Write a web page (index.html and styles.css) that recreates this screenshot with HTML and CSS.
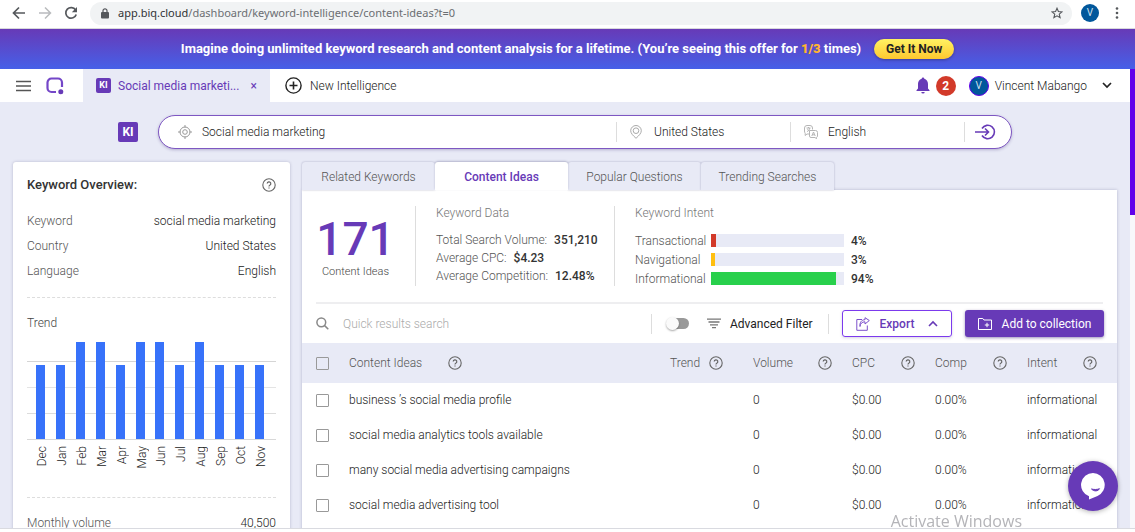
FILE: index.html
```html
<!DOCTYPE html>
<html lang="en">
<head>
  <meta charset="UTF-8">
  <meta name="viewport" content="width=device-width, initial-scale=1.0">
  <title>Content Ideas</title>
  <link rel="stylesheet" href="styles.css">
</head>
<body>

  <!-- shared icons -->
  <svg class="sprite" aria-hidden="true">
    <symbol id="help" viewBox="0 0 14 14">
      <circle cx="7" cy="7" r="6.2" fill="none" stroke="currentColor" stroke-width="1.1"/>
      <path d="M5.2 5.6a1.8 1.8 0 1 1 2.6 1.6c-.6.3-.8.6-.8 1.2M7 9.5v1.1" fill="none" stroke="currentColor" stroke-width="1.2"/>
    </symbol>
  </svg>

  <div class="browser-bar">
    <button class="icon-btn" aria-label="Back"><svg width="14" height="14" viewBox="0 0 14 14"><path d="M13 7H2M7 1.5L1.5 7 7 12.5" fill="none" stroke="#55585c" stroke-width="1.7"/></svg></button>
    <button class="icon-btn" aria-label="Forward"><svg width="14" height="14" viewBox="0 0 14 14"><path d="M1 7h11M7 1.5L12.5 7 7 12.5" fill="none" stroke="#b9bbbe" stroke-width="1.5"/></svg></button>
    <button class="icon-btn" aria-label="Reload"><svg width="14" height="14" viewBox="0 0 14 14"><path d="M11.6 4A5.3 5.3 0 1 0 12.2 8.4" fill="none" stroke="#55585c" stroke-width="1.7"/><path d="M13 1v5.2H7.8z" fill="#55585c"/></svg></button>
    <div class="address">
      <svg width="8" height="11" viewBox="0 0 8 11"><rect y="4" width="8" height="6.5" rx="1" fill="#55585c"/><path d="M2 4.5V2.8a2 2 0 0 1 4 0v1.7" fill="none" stroke="#55585c" stroke-width="1.2"/></svg>
      <label for="url">app.biq.cloud</label>
      <input type="text" id="url" value="/dashboard/keyword-intelligence/content-ideas?t=0">
      <svg width="12" height="12" viewBox="0 0 24 24"><path d="M12 2.5l2.8 6.6 7.2.6-5.5 4.7 1.7 7-6.2-3.8-6.2 3.8 1.7-7L2 9.7l7.2-.6z" fill="none" stroke="#55585c" stroke-width="2.2"/></svg>
    </div>
    <span class="avatar">V</span>
    <button class="icon-btn more" aria-label="Menu"><svg width="4" height="14" viewBox="0 0 4 14" fill="#55585c"><circle cx="2" cy="2.5" r="1.3"/><circle cx="2" cy="7" r="1.3"/><circle cx="2" cy="11.5" r="1.3"/></svg></button>
  </div>

  <div class="promo">
    <p>Imagine doing unlimited keyword research and content analysis for a lifetime. (You’re seeing this offer for <strong>1/3</strong> times)</p>
    <button class="promo-btn">Get It Now</button>
  </div>

  <div class="app">
    <div class="page">
      <nav class="topnav">
        <button class="icon-btn menu" aria-label="Toggle menu"><svg width="15" height="12" viewBox="0 0 15 12"><path d="M0 1.5h15M0 6h15M0 10.5h15" stroke="#555" stroke-width="1.3"/></svg></button>
        <svg class="logo" width="18" height="18" viewBox="0 0 18 18"><path d="M16 10V5.5A4 4 0 0 0 12 1.5H5.5a4 4 0 0 0-4 4V11a4 4 0 0 0 4 4H10" fill="none" stroke="#7446c8" stroke-width="2.2"/><circle cx="14.8" cy="14.8" r="2.5" fill="#673ab7"/></svg>
        <div class="work-tab">
          <span class="ki">KI</span>
          <a href="#">Social media marketi...</a>
          <button class="icon-btn close" aria-label="Close tab">×</button>
        </div>
        <button class="new-intel">
          <svg width="17" height="17" viewBox="0 0 17 17"><circle cx="8.5" cy="8.5" r="7.6" fill="none" stroke="#222" stroke-width="1.4"/><path d="M8.5 4.5v8M4.5 8.5h8" stroke="#222" stroke-width="1.6"/></svg>
          New Intelligence
        </button>
        <div class="account">
          <svg width="14" height="17" viewBox="0 0 14 17" fill="#673ab7"><path d="M7 .5c.8 0 1.3.6 1.3 1.3C10.7 2.5 12 4.5 12 7v4.5l1.5 1.7v.8H.5v-.8L2 11.5V7c0-2.5 1.3-4.5 3.7-5.2C5.7 1.1 6.2.5 7 .5zM5.3 15h3.4A1.7 1.5 0 0 1 5.3 15z"/></svg>
          <span class="count">2</span>
          <span class="avatar ring">V</span>
          <button class="user">Vincent Mabango
            <svg width="10" height="7" viewBox="0 0 10 7"><path d="M1 1l4 4 4-4" fill="none" stroke="#222" stroke-width="1.7"/></svg>
          </button>
        </div>
      </nav>

      <form class="search-row">
        <span class="ki big">KI</span>
        <div class="search">
          <label class="field keyword">
            <svg width="14" height="14" viewBox="0 0 14 14" fill="none" stroke="#999"><circle cx="7" cy="7" r="5"/><circle cx="7" cy="7" r="2.3"/><path d="M7 0v2.5M7 11.5V14M0 7h2.5M11.5 7H14"/></svg>
            <input type="text" value="Social media marketing" aria-label="Keyword">
          </label>
          <label class="field country">
            <svg width="12" height="14" viewBox="0 0 12 14" fill="none" stroke="#aaa"><path d="M6 13.3C3 10.5.7 8.3.7 5.7a5.3 5.2 0 0 1 10.6 0c0 2.6-2.3 4.8-5.3 7.6z"/><circle cx="6" cy="5.7" r="2.8"/></svg>
            <input type="text" value="United States" aria-label="Country">
          </label>
          <label class="field language">
            <svg width="14" height="14" viewBox="0 0 14 14" fill="none" stroke="#b5b5b5"><path d="M5.5 9H3l-1.8 1.5V8.3A4 4 0 0 1 .5 6V3A2.5 2.5 0 0 1 3 .5h3A2.5 2.5 0 0 1 8.5 3v1.5"/><path d="M5.5 5.5h6a2 2 0 0 1 2 2V11a2 2 0 0 1-1 1.5v1.3L11 12.5H7A1.5 1.5 0 0 1 5.5 11zM7.8 11l1.7-4 1.7 4M8.4 9.8h2.2M2.5 3h4M4.5 2v1M3 6.5C4.500 6 5.500 5 5.700 3M3.300 4.200L5 5.700"/></svg>
            <input type="text" value="English" aria-label="Language">
          </label>
          <button class="icon-btn go" aria-label="Search"><svg width="21" height="16" viewBox="0 0 21 16" fill="none" stroke="#673ab7" stroke-width="1.6"><path d="M0 8h13M10 4.5L13.5 8 10 11.5"/><path d="M7 4.5a6.7 6.7 0 1 1 0 7"/></svg></button>
        </div>
      </form>

      <div class="columns">
        <aside class="overview">
          <header>
            <h2>Keyword Overview:</h2>
            <svg class="help"><use href="#help"/></svg>
          </header>
          <dl>
            <div><dt>Keyword</dt><dd>social media marketing</dd></div>
            <div><dt>Country</dt><dd>United States</dd></div>
            <div><dt>Language</dt><dd>English</dd></div>
          </dl>
          <section class="trend">
            <h3>Trend</h3>
            <div class="bars">
              <i style="height: 74px"></i><i style="height: 74px"></i><i style="height: 97px"></i><i style="height: 97px"></i>
              <i style="height: 74px"></i><i style="height: 97px"></i><i style="height: 97px"></i><i style="height: 74px"></i>
              <i style="height: 97px"></i><i style="height: 74px"></i><i style="height: 74px"></i><i style="height: 74px"></i>
            </div>
            <div class="months">
              <span>Dec</span><span>Jan</span><span>Feb</span><span>Mar</span><span>Apr</span><span>May</span>
              <span>Jun</span><span>Jul</span><span>Aug</span><span>Sep</span><span>Oct</span><span>Nov</span>
            </div>
          </section>
          <dl class="volume">
            <div><dt>Monthly volume</dt><dd>40,500</dd></div>
          </dl>
        </aside>

        <main class="results">
          <div class="tabs">
            <a href="#">Related Keywords</a>
            <a href="#" class="active">Content Ideas</a>
            <a href="#">Popular Questions</a>
            <a href="#">Trending Searches</a>
          </div>
          <div class="panel">
            <div class="summary">
              <div class="total"><b>171</b><span>Content Ideas</span></div>
              <div class="data">
                <h4>Keyword Data</h4>
                <p>Total Search Volume: <b>351,210</b></p>
                <p>Average CPC: <b>$4.23</b></p>
                <p>Average Competition: <b>12.48%</b></p>
              </div>
              <div class="intent">
                <h4>Keyword Intent</h4>
                <div class="meter"><span>Transactional</span><div><i class="red" style="width: 4%"></i></div><b>4%</b></div>
                <div class="meter"><span>Navigational</span><div><i class="yellow" style="width: 3%"></i></div><b>3%</b></div>
                <div class="meter"><span>Informational</span><div><i class="green" style="width: 94%"></i></div><b>94%</b></div>
              </div>
            </div>

            <div class="toolbar">
              <label class="quick">
                <svg width="13" height="13" viewBox="0 0 13 13" fill="none" stroke="#888" stroke-width="1.5"><circle cx="5.3" cy="5.3" r="4.4"/><path d="M8.6 8.6l3.7 3.7"/></svg>
                <input type="text" placeholder="Quick results search" aria-label="Quick results search">
              </label>
              <label class="filter">
                <input type="checkbox" class="switch">
                <svg width="14" height="11" viewBox="0 0 14 11"><path d="M0 1.2h14M1.5 4h11M3 6.8h8M5 9.6h4" stroke="#777" stroke-width="1.3"/></svg>
                Advanced Filter
              </label>
              <button class="btn export">
                <svg width="14" height="14" viewBox="0 0 14 14" fill="none" stroke="#7c50cb"><path d="M6 2.5H.8v10.8h10.5V8.5"/><path d="M4 9.5c.2-3 2-4.7 5-4.7V7l4.3-3.5L9 .7v2C5.500 2.800 3.500 5.500 4 9.500z"/></svg>
                Export
                <svg width="10" height="7" viewBox="0 0 10 7"><path d="M1 6l4-4 4 4" fill="none" stroke="#673ab7" stroke-width="1.6"/></svg>
              </button>
              <button class="btn add">
                <svg width="14" height="12" viewBox="0 0 14 12" fill="none" stroke="#fff"><path d="M.5 11.5V.5h4.3L6 2h7.5v9.5zM9 4.8v4.4M6.8 7h4.4"/></svg>
                Add to collection
              </button>
            </div>

            <table>
              <colgroup>
                <col class="c-check"><col><col class="c-trend"><col class="c-volume"><col class="c-cpc"><col class="c-comp"><col class="c-intent">
              </colgroup>
              <thead>
                <tr>
                  <th><input type="checkbox" aria-label="Select all"></th>
                  <th><div class="th near">Content Ideas<svg class="help"><use href="#help"/></svg></div></th>
                  <th><div class="th tight">Trend<svg class="help"><use href="#help"/></svg></div></th>
                  <th><div class="th">Volume<svg class="help"><use href="#help"/></svg></div></th>
                  <th><div class="th">CPC<svg class="help"><use href="#help"/></svg></div></th>
                  <th><div class="th">Comp<svg class="help"><use href="#help"/></svg></div></th>
                  <th><div class="th">Intent<svg class="help"><use href="#help"/></svg></div></th>
                </tr>
              </thead>
              <tbody>
                <tr><td><input type="checkbox" aria-label="Select row"></td><td>business ’s social media profile</td><td></td><td>0</td><td>$0.00</td><td>0.00%</td><td>informational</td></tr>
                <tr><td><input type="checkbox" aria-label="Select row"></td><td>social media analytics tools available</td><td></td><td>0</td><td>$0.00</td><td>0.00%</td><td>informational</td></tr>
                <tr><td><input type="checkbox" aria-label="Select row"></td><td>many social media advertising campaigns</td><td></td><td>0</td><td>$0.00</td><td>0.00%</td><td>informational</td></tr>
                <tr><td><input type="checkbox" aria-label="Select row"></td><td>social media advertising tool</td><td></td><td>0</td><td>$0.00</td><td>0.00%</td><td>informational</td></tr>
              </tbody>
            </table>
          </div>
        </main>
      </div>
    </div>
    <div class="scrollbar"><div class="thumb"></div></div>
  </div>

  <button class="chat" aria-label="Open chat">
    <svg width="26" height="28" viewBox="0 0 26 28"><path d="M13 1a12 12 0 0 1 4.5 23L9 27.5v-3.2A12 12 0 0 1 13 1z" fill="#fff"/><path d="M11.5 17c2.5 2.7 6.5 2.4 8-.3-2.5 1-5.5 1-8 .3z" fill="#673ab7" stroke="#673ab7"/></svg>
  </button>
  <div class="watermark">Activate Windows</div>

</body>
</html>
```
FILE: styles.css
```css
* {
  box-sizing: border-box;
}

body {
  margin: 0;
  height: 100vh;
  display: flex;
  flex-direction: column;
  overflow: hidden;
  padding-bottom: 3px;
  background: #fff;
  color: #222;
  font-family: Roboto, Arial, sans-serif;
  font-size: 12px;
  font-weight: 300;
  line-height: 16px;
}

h2, h3, h4, p, dl, dd {
  margin: 0;
  font-weight: 300;
}

a {
  color: inherit;
  text-decoration: none;
}

button, input {
  font: inherit;
  color: inherit;
}

button {
  border: none;
  background: none;
  padding: 0;
  cursor: pointer;
}

input[type="text"] {
  border: none;
  outline: none;
  background: none;
  padding: 0;
  min-width: 0;
  flex: 1;
}

svg {
  flex: none;
}

.sprite {
  position: absolute;
  width: 0;
  height: 0;
}

.icon-btn {
  display: flex;
  align-items: center;
}

.help {
  width: 14px;
  height: 14px;
  color: #666;
}

.avatar {
  width: 18px;
  height: 18px;
  border-radius: 50%;
  background: #01579b;
  color: #cfe0ee;
  font-size: 10px;
  font-weight: 400;
  line-height: 18px;
  text-align: center;
  flex: none;
}

/* Browser bar */
.browser-bar {
  flex: none;
  height: 29px;
  padding: 0 16px 2px 12px;
  display: flex;
  align-items: center;
  gap: 12px;
  border-bottom: 1px solid #d8d8dc;
}

.browser-bar .more {
  margin-left: 4px;
}

.address {
  flex: 1;
  height: 23px;
  margin-right: -3px;
  padding: 0 9px 0 11px;
  border-radius: 12px;
  background: #f1f3f4;
  display: flex;
  align-items: center;
  font-family: "Noto Sans", sans-serif;
  font-size: 11px;
  font-weight: 400;
  color: #6b6e72;
}

.address label {
  margin-left: 9px;
  color: #303235;
}

/* Promo strip */
.promo {
  flex: none;
  height: 40px;
  display: flex;
  align-items: center;
  justify-content: center;
  gap: 13px;
  background: linear-gradient(#673ab7, #4660e8);
  color: #fff;
  font-size: 13px;
}

.promo p {
  font-weight: 700;
}

.promo strong {
  color: #ffb52e;
}

.promo-btn {
  height: 20px;
  width: 80px;
  border-radius: 10px;
  background: linear-gradient(#fff263, #fdc82f);
  box-shadow: 0 1px 3px rgba(0, 0, 0, 0.3);
  color: #222;
  font-size: 12px;
  font-weight: 700;
}

/* App */
.app {
  flex: 1;
  min-height: 0;
  display: flex;
  border-bottom: 1px solid #d9dae0;
}

.page {
  flex: 1;
  min-width: 0;
  overflow: hidden;
  background: #e8eaf6;
}

.scrollbar {
  width: 5px;
  background: #f8f8fb;
}

.thumb {
  height: 146px;
  background: #6200ea;
}

/* Top navigation */
.topnav {
  height: 33px;
  padding: 0 18px 0 16px;
  display: flex;
  align-items: center;
  background: #fff;
  font-weight: 400;
}

.logo {
  margin: 0 19px 0 15px;
}

.work-tab {
  align-self: stretch;
  width: 187px;
  padding: 0 13px;
  display: flex;
  align-items: center;
  gap: 7px;
  background: #e8eaf6;
  color: #673ab7;
}

.work-tab .close {
  margin-left: auto;
}

.ki {
  width: 15px;
  height: 15px;
  border-radius: 2px;
  background: #673ab7;
  color: #fff;
  font-size: 9px;
  font-weight: 700;
  line-height: 15px;
  text-align: center;
}

.ki.big {
  width: 20px;
  height: 20px;
  font-size: 12px;
  line-height: 20px;
}

.new-intel {
  margin-left: 15px;
  display: flex;
  align-items: center;
  gap: 8px;
  font-weight: 300;
}

.account {
  margin-left: auto;
  display: flex;
  align-items: center;
}

.count {
  width: 20px;
  height: 20px;
  margin: 0 13px 0 6px;
  border-radius: 50%;
  background: #d23a2a;
  color: #fff;
  font-weight: 700;
  line-height: 20px;
  text-align: center;
}

.avatar.ring {
  width: 20px;
  height: 20px;
  border: 1px solid #6200ea;
}

.user {
  margin-left: 6px;
  display: flex;
  align-items: center;
  gap: 15px;
  font-weight: 300;
}

/* Search */
.search-row {
  margin: 13px 118px 0;
  display: flex;
  align-items: center;
  gap: 20px;
}

.search {
  flex: 1;
  height: 34px;
  padding-left: 19px;
  display: flex;
  align-items: center;
  border: 1px solid #7e57c2;
  border-radius: 17px;
  background: #fff;
  box-shadow: 0 1px 3px rgba(60, 40, 120, 0.3);
}

.field {
  height: 20px;
  display: flex;
  align-items: center;
  gap: 10px;
  border-right: 1px solid #ddd;
}

.field.keyword {
  flex: 1;
}

.field.country {
  width: 174px;
  padding-left: 13px;
  gap: 12px;
}

.field.language {
  width: 174px;
  padding-left: 13px;
}

.go {
  padding: 0 15px 0 10px;
}

/* Columns */
.columns {
  padding: 13px 13px 0;
  display: flex;
  gap: 12px;
}

/* Overview card */
.overview {
  flex: none;
  width: 277px;
  height: 420px;
  padding: 15px 14px;
  border-radius: 3px;
  background: #fff;
  box-shadow: 0 0 3px rgba(60, 60, 110, 0.3);
}

.overview header {
  display: flex;
  align-items: center;
  justify-content: space-between;
  margin-bottom: 15px;
}

.overview h2 {
  font-size: 13px;
  font-weight: 500;
  color: #333;
}

.overview dl {
  border-bottom: 1px dashed #ddd;
  padding-bottom: 14px;
}

.overview dl div {
  height: 25px;
  display: flex;
  align-items: center;
  justify-content: space-between;
}

.overview dt {
  color: #555;
}

.trend {
  padding-top: 17px;
  border-bottom: 1px dashed #ddd;
}

.trend h3 {
  font-size: 12px;
  color: #444;
}

.bars, .months {
  display: flex;
  justify-content: space-around;
  padding: 0 7px 0 4px;
}

.bars {
  height: 109px;
  align-items: flex-end;
  border-bottom: 1px solid #d8d8d8;
  background:
    linear-gradient(#d5d5d5, #d5d5d5) 0 30px / 100% 1px no-repeat,
    linear-gradient(#e4e4e4, #e4e4e4) 0 56px / 100% 1px no-repeat,
    linear-gradient(#dcdcdc, #dcdcdc) 0 82px / 100% 1px no-repeat;
}

.bars i {
  width: 9px;
  background: #3772fa;
}

.months {
  height: 57px;
  padding: 6px 5px 0 6px;
  align-items: flex-start;
}

.months span {
  width: 9px;
  line-height: 9px;
  writing-mode: vertical-rl;
  transform: rotate(180deg);
}

.overview .volume {
  padding-top: 12px;
}

/* Results */
.results {
  flex: 1;
  min-width: 0;
}

.tabs {
  display: flex;
  align-items: flex-end;
}

.tabs a {
  width: 133px;
  height: 28px;
  line-height: 30px;
  border-radius: 3px 3px 0 0;
  box-shadow: 0 0 2px rgba(60, 60, 110, 0.4);
  background: #e8eaf6;
  color: #555;
  text-align: center;
}

.tabs .active {
  position: relative;
  z-index: 1;
  background: #fff;
  box-shadow: 0 -1px 2px rgba(60, 60, 110, 0.3);
  color: #673ab7;
  font-weight: 500;
}

.panel {
  height: 400px;
  background: #fff;
  box-shadow: 0 0 3px rgba(60, 60, 110, 0.3);
}

.summary {
  margin: 0 14px;
  padding: 16px 0;
  display: flex;
  border-bottom: 2px solid #eeeef0;
}

.total {
  width: 99px;
  padding: 7px 20px 0 0;
  display: flex;
  flex-direction: column;
  align-items: center;
  color: #444;
  font-size: 11px;
  line-height: 14px;
}

.total b {
  color: #673ab7;
  font-size: 46px;
  font-weight: 500;
  line-height: 52px;
}

.data, .intent {
  height: 80px;
  padding-left: 20px;
  border-left: 1px solid #ddd;
  color: #555;
}

.data {
  width: 199px;
}

.data p {
  line-height: 18px;
}

.data b, .intent b {
  margin-left: 4px;
  color: #333;
  font-weight: 500;
}

.summary h4 {
  line-height: 14px;
  margin-bottom: 11px;
  font-size: 12px;
  color: #777;
}

.meter {
  height: 19px;
  display: flex;
  align-items: center;
  gap: 3px;
}

.meter span {
  width: 73px;
}

.meter div {
  width: 133px;
  height: 13px;
  background: #e8eaf6;
}

.meter i {
  display: block;
  height: 100%;
  min-width: 4px;
}

.red {
  background: #d23a2a;
}

.yellow {
  background: #ffbf10;
}

.green {
  background: #28d04c;
}

/* Toolbar */
.toolbar {
  height: 39px;
  padding: 0 13px 0 14px;
  display: flex;
  align-items: center;
}

.quick {
  flex: 1;
  display: flex;
  align-items: center;
  gap: 14px;
}

.quick input::placeholder {
  color: #aaa;
  opacity: 1;
}

.filter {
  height: 20px;
  width: 178px;
  margin-right: 13px;
  padding-left: 14px;
  display: flex;
  align-items: center;
  border-left: 1px solid #ddd;
  border-right: 1px solid #ddd;
  color: #222;
  font-weight: 400;
}

.filter svg {
  margin: 0 9px 0 18px;
}

.switch {
  appearance: none;
  position: relative;
  width: 23px;
  height: 11px;
  margin: 0;
  border-radius: 6px;
  background: linear-gradient(90deg, transparent 30%, #999 30%);
}

.switch::before {
  content: "";
  position: absolute;
  left: 0;
  top: -1px;
  width: 13px;
  height: 13px;
  border-radius: 50%;
  background: #fafafa;
  box-shadow: 0 1px 2px rgba(0, 0, 0, 0.35);
}

.btn {
  height: 27px;
  display: flex;
  align-items: center;
  justify-content: center;
  border-radius: 3px;
  font-weight: 500;
}

.export {
  width: 110px;
  gap: 10px;
  border: 1px solid #7c3aed;
  color: #673ab7;
  box-shadow: 0 1px 3px rgba(60, 40, 120, 0.2);
}

.export svg:last-child {
  margin-left: 4px;
}

.add {
  width: 139px;
  margin-left: 13px;
  gap: 10px;
  background: #673ab7;
  color: #fff;
  font-weight: 400;
  box-shadow: 0 1px 3px rgba(60, 40, 120, 0.5);
}

/* Table */
table {
  width: 100%;
  table-layout: fixed;
  border-collapse: collapse;
}

.c-check { width: 47px; }
.c-trend { width: 83px; }
.c-volume { width: 99px; }
.c-cpc { width: 83px; }
.c-comp { width: 92px; }
.c-intent { width: 90px; }

th, td {
  padding: 0;
  text-align: left;
  white-space: nowrap;
}

th {
  height: 40px;
  background: #e8eaf6;
  color: #555;
  font-weight: 300;
}

td {
  height: 35px;
  padding-bottom: 2px;
}

td:first-child {
  padding-bottom: 0;
}

.th {
  display: flex;
  align-items: center;
  justify-content: space-between;
  padding-right: 20px;
}

.th.near {
  justify-content: flex-start;
  gap: 26px;
}

.th.tight {
  justify-content: flex-start;
  gap: 9px;
}

th input, td input {
  appearance: none;
  display: block;
  width: 13px;
  height: 13px;
  margin: 0 0 0 14px;
  border: 1px solid #999;
  border-radius: 1px;
  background: #fff;
}

th input {
  background: none;
}

/* Floating items */
.chat {
  position: fixed;
  right: 17px;
  bottom: 21px;
  width: 50px;
  height: 50px;
  display: flex;
  align-items: center;
  justify-content: center;
  border-radius: 50%;
  background: #673ab7;
  box-shadow: 0 1px 5px rgba(0, 0, 0, 0.3);
}

.watermark {
  position: fixed;
  right: 113px;
  bottom: 1px;
  color: #b4b4b8;
  font-family: "Open Sans", sans-serif;
  font-size: 16px;
  font-weight: 400;
  line-height: 20px;
}
```
